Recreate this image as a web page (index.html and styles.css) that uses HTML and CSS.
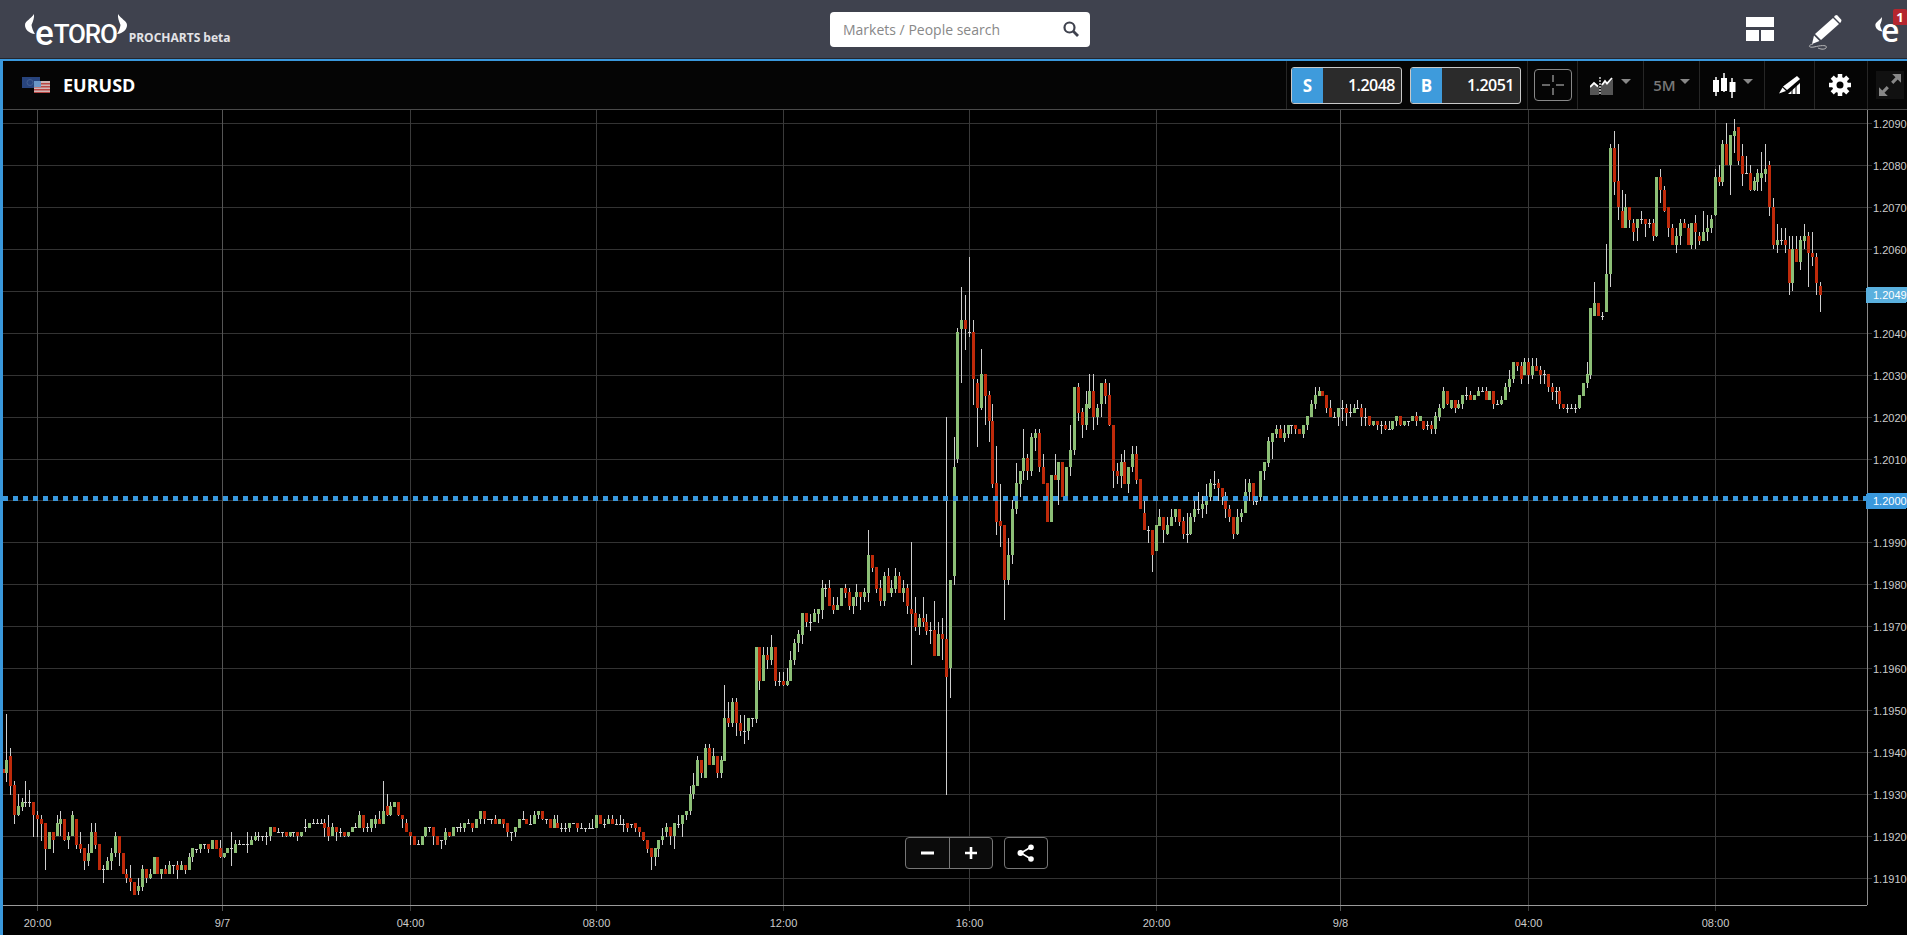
FILE: index.html
```html
<!DOCTYPE html>
<html lang="en">
<head>
  <meta charset="UTF-8" />
  <title>eToro ProCharts - EURUSD</title>
  <link rel="stylesheet" href="styles.css">
</head>
<body>
  <header class="topbar">
    <div class="brand">
      <div class="logo">
        <svg class="horn" width="10" height="22" viewBox="0 0 10 22"><path d="M9 0C9.500 4 8 7 6.500 11C7 14 8 17 10 20C4 19.500 0 15.500 0 11C0 7 6 5 9 0Z" fill="#fff"/></svg>
        <span class="logo-e">e</span><span class="logo-rest">TORO</span>
        <svg class="horn" width="10" height="22" viewBox="0 0 10 22"><path d="M1 0C0.500 4 2 7 3.500 11C3 14 2 17 0 20C6 19.500 10 15.500 10 11C10 7 4 5 1 0Z" fill="#fff"/></svg>
      </div>
      <span class="procharts">PROCHARTS beta</span>
    </div>
    <div class="search">
      <input type="text" placeholder="Markets / People search" />
      <svg width="16" height="16" viewBox="0 0 16 16"><circle cx="6.500" cy="6.500" r="5" fill="none" stroke="#3f424e" stroke-width="2.200"/><path d="M10.300 10.300L15 15" stroke="#3f424e" stroke-width="2.800"/></svg>
    </div>
    <div class="top-icons">
      <svg class="icon-layout" width="28" height="24" viewBox="0 0 28 24"><rect width="28" height="10" fill="#fff"/><rect y="13" width="13" height="11" fill="#fff"/><rect x="15" y="13" width="13" height="11" fill="#fff"/></svg>
      <svg class="icon-pencil" width="34" height="36" viewBox="0 0 34 36">
        <path d="M25 3L31 9L13 25L7 19Z" fill="#fff"/>
        <path d="M27 0.500L29 0L33.500 5L33 7L32 8L26 2Z" fill="#fff"/>
        <path d="M6 20.500L11.500 26L4 29Z" fill="#fff"/>
        <path d="M5 29C0 30 0 33 6 32C14 30 20 30 18 33C16 35 12 34 10 33" fill="none" stroke="#bbb" stroke-width="1"/>
      </svg>
      <div class="account">
        <svg class="horn-small" width="8" height="16" viewBox="0 0 10 22"><path d="M9 0C9.500 4 8 7 6.500 11C7 14 8 17 10 20C4 19.500 0 15.500 0 11C0 7 6 5 9 0Z" fill="#fff"/></svg>
        <span class="account-e">e</span>
        <span class="badge">1</span>
      </div>
    </div>
  </header>

  <main class="panel">
    <div class="toolbar">
      <div class="symbol">
        <span class="flags">
          <svg width="28" height="16" viewBox="0 0 28 16">
            <rect width="18" height="11" y="0" fill="#2f4f92"/>
            <circle cx="8" cy="5.500" r="3" fill="none" stroke="#4f6fa8" stroke-width="1"/>
            <rect x="12" y="4" width="16" height="12" fill="#f3d6d6"/>
            <rect x="12" y="6" width="16" height="1.500" fill="#d9534f"/>
            <rect x="12" y="9" width="16" height="1.500" fill="#d9534f"/>
            <rect x="12" y="12" width="16" height="1.500" fill="#d9534f"/>
            <rect x="12" y="15" width="16" height="1" fill="#d9534f"/>
            <rect x="12" y="4" width="7" height="6" fill="#7fb2ea"/>
          </svg>
        </span>
        <span class="symbol-name">EURUSD</span>
      </div>
      <div class="tools">
        <div class="tool tool-prices">
          <div class="price-box"><span class="price-side">S</span><span class="price-value">1.2048</span></div>
          <div class="price-box"><span class="price-side">B</span><span class="price-value">1.2051</span></div>
        </div>
        <div class="tool tool-cross">
          <div class="cross-box">
            <svg width="24" height="24" viewBox="0 0 24 24"><path d="M1 12H9M15 12H23M12 2V9M12 15V22" stroke="#888" stroke-width="1.500"/></svg>
          </div>
        </div>
        <div class="tool tool-type">
          <svg class="type-icon" width="23" height="18" viewBox="0 0 23 18">
            <path d="M0 18V10L4 6L9 10V18Z" fill="#555"/>
            <path d="M11 18V7L15 5L17 7L23 2V18Z" fill="#555"/>
            <path d="M0 10L4 6L8 9.500M12 8L15 4L17 6.500L22 1" fill="none" stroke="#fff" stroke-width="1.800"/>
            <path d="M10 0V18" stroke="#fff" stroke-width="1.200" stroke-dasharray="2 1"/>
          </svg>
          <span class="caret"></span>
        </div>
        <div class="tool tool-period">
          <span class="period">5M</span>
          <span class="caret"></span>
        </div>
        <div class="tool tool-candles">
          <svg class="candles-icon" width="23" height="25" viewBox="0 0 23 25">
            <path d="M3 4V23M11 0V19M19 5V25" stroke="#fff" stroke-width="1.500"/>
            <rect y="7" width="6" height="12" fill="#fff"/>
            <rect x="8" y="5" width="6" height="13" fill="#fff"/>
            <rect x="16.500" y="9" width="6" height="10" fill="#fff"/>
          </svg>
          <span class="caret"></span>
        </div>
        <div class="tool tool-draw">
          <svg width="21" height="18" viewBox="0 0 21 18">
            <path d="M18 0L21 3L8 14L4 10.500Z" fill="#fff"/>
            <path d="M3.500 11.500L7 15L0 17.500Z" fill="#fff"/>
            <path d="M9 18L21 7V18Z" fill="#fff"/>
            <path d="M13 18V13M17 18V9" stroke="#000" stroke-width="1"/>
          </svg>
        </div>
        <div class="tool tool-gear">
          <svg width="22" height="22" viewBox="0 0 22 22">
            <g stroke="#fff" stroke-width="4.500">
              <path d="M11 0V22M0 11H22M3.200 3.200L18.800 18.800M18.800 3.200L3.200 18.800"/>
            </g>
            <circle cx="11" cy="11" r="8" fill="#fff"/>
            <circle cx="11" cy="11" r="3.500" fill="#050505"/>
          </svg>
        </div>
        <div class="tool tool-full">
          <svg width="22" height="22" viewBox="0 0 20 20">
            <path d="M12 0H20V8L17 5L13 9L11 7L15 3Z" fill="#888"/>
            <path d="M8 20H0V12L3 15L7 11L9 13L5 17Z" fill="#888"/>
          </svg>
        </div>
      </div>
    </div>

    <div class="chart">
      <svg id="plot" class="plot" viewBox="3 110 1904 825" width="1904" height="825"></svg>
      <div class="chart-controls">
        <div class="zoom-group">
          <button class="ctl-btn" type="button"><svg width="14" height="14" viewBox="0 0 14 14"><rect y="5.500" width="13" height="3" fill="#fff"/></svg></button>
          <button class="ctl-btn" type="button"><svg width="14" height="14" viewBox="0 0 14 14"><path d="M7 1V13M1 7H13" stroke="#fff" stroke-width="2.600"/></svg></button>
        </div>
        <button class="ctl-btn share" type="button">
          <svg width="18" height="18" viewBox="0 0 18 18"><path d="M14 3L4 9L14 15" fill="none" stroke="#fff" stroke-width="1.600"/><circle cx="14" cy="3.200" r="2.800" fill="#fff"/><circle cx="3.500" cy="9" r="3" fill="#fff"/><circle cx="14" cy="15" r="2.800" fill="#fff"/></svg>
        </button>
      </div>
    </div>
  </main>

  <script src="chart.js"></script>
</body>
</html>
```

FILE: styles.css
```css
* {
  box-sizing: border-box;
}
html, body {
  margin: 0;
  height: 100%;
  overflow: hidden;
}
body {
  display: flex;
  flex-direction: column;
  background-color: #000;
  font-family: "Open Sans", Arial, sans-serif;
  color: #fff;
}

/* top bar */
.topbar {
  display: flex;
  align-items: center;
  height: 59px;
  flex: none;
  background-color: #3f424e;
  border-bottom: 1px solid #24262d;
}
.brand {
  display: flex;
  align-items: flex-end;
  width: 830px;
  height: 100%;
  padding: 0 0 13px 25px;
}
.logo {
  display: flex;
  align-items: flex-end;
  height: 32px;
  margin-bottom: -1px;
  line-height: 1;
  font-family: Roboto, Arial, sans-serif;
  font-weight: 500;
}
.horn {
  align-self: flex-start;
  flex: none;
}
.logo-e {
  font-size: 35px;
  line-height: 24px;
}
.logo-rest {
  font-size: 26px;
  line-height: 24px;
  letter-spacing: -1.2px;
}
.procharts {
  margin-left: 2px;
  font-size: 12px;
  line-height: 14px;
  font-weight: 700;
  color: #e3e3e6;
}
.search {
  display: flex;
  align-items: center;
  width: 260px;
  height: 35px;
  padding: 0 11px 0 13px;
  background-color: #fff;
  border-radius: 4px;
}
.search input {
  flex: 1;
  min-width: 0;
  border: 0;
  padding: 0;
  outline: none;
  font-family: "Open Sans", Arial, sans-serif;
  font-size: 14px;
}
.search input::placeholder {
  color: #888;
  opacity: 1;
}
.top-icons {
  display: flex;
  flex: 1;
  align-items: center;
  justify-content: flex-end;
  height: 100%;
}
.icon-layout {
  margin-right: 34px;
}
.icon-pencil {
  margin-top: 8px;
  margin-right: 33px;
}
.account {
  position: relative;
  display: flex;
  align-items: flex-start;
  width: 32px;
  height: 100%;
}
.horn-small {
  flex: none;
  margin-top: 17px;
}
.account-e {
  font-size: 32px;
  font-weight: 600;
  line-height: 30px;
  margin-top: 15px;
  margin-left: -2px;
}
.badge {
  position: absolute;
  top: 9px;
  right: 0;
  width: 14px;
  height: 16px;
  border-radius: 2px 2px 0 2px;
  background-color: #b5262e;
  font-size: 13px;
  line-height: 16px;
  font-weight: 700;
  text-align: center;
}

/* chart panel */
.panel {
  display: flex;
  flex-direction: column;
  flex: 1;
  min-height: 0;
  background-color: #000;
  border-top: 2px solid #3a98dc;
  border-left: 3px solid #3a98dc;
}
.toolbar {
  display: flex;
  align-items: stretch;
  justify-content: space-between;
  height: 49px;
  flex: none;
  background-color: #050505;
  border-bottom: 1px solid #4a4a4a;
}
.symbol {
  display: flex;
  align-items: center;
  padding-left: 19px;
}
.flags {
  display: flex;
  margin-right: 13px;
  opacity: 0.85;
}
.symbol-name {
  font-size: 18px;
  font-weight: 700;
}
.tools {
  display: flex;
  height: 100%;
}
.tool {
  display: flex;
  align-items: center;
  justify-content: center;
  border-left: 1px solid #262626;
}
.tool-prices {
  width: 241px;
  gap: 8px;
  justify-content: flex-start;
  padding-left: 4px;
}
.tool-cross {
  width: 50px;
}
.tool-type {
  width: 66px;
  gap: 8px;
}
.type-icon {
  margin-top: 2px;
}
.tool-period {
  width: 56px;
  gap: 4px;
}
.tool-candles {
  width: 65px;
  gap: 7px;
  padding-left: 2px;
}
.tool-draw {
  width: 50px;
}
.tool-gear {
  width: 53px;
  padding-right: 2px;
}
.tool-full {
  width: 40px;
  padding-left: 5px;
}
.price-box {
  display: flex;
  width: 111px;
  height: 37px;
  border: 1px solid #c8c8c8;
  border-radius: 3px;
  overflow: hidden;
  background-color: #2b2b2b;
}
.price-side {
  width: 31px;
  background-color: #3e9bdc;
  font-size: 17px;
  font-weight: 700;
  line-height: 35px;
  text-align: center;
}
.price-value {
  flex: 1;
  padding-right: 6px;
  font-size: 16px;
  font-weight: 600;
  line-height: 35px;
  text-align: right;
  letter-spacing: -0.5px;
}
.cross-box {
  display: flex;
  align-items: center;
  justify-content: center;
  width: 38px;
  height: 32px;
  border: 1px solid #888;
  border-radius: 4px;
}
.caret {
  width: 0;
  height: 0;
  margin-top: -8px;
  border-left: 5px solid transparent;
  border-right: 5px solid transparent;
  border-top: 5px solid #888;
}
.period {
  font-size: 15px;
  font-weight: 600;
  color: #777;
}
.tool-full svg {
  background-color: #111;
  box-shadow: 0 0 0 3px #111;
}

/* chart area */
.chart {
  position: relative;
  flex: 1;
  min-height: 0;
}
.plot {
  display: block;
  font-family: "Liberation Sans", Arial, sans-serif;
  font-size: 11px;
}
.chart-controls {
  position: absolute;
  left: 902px;
  top: 727px;
  display: flex;
  gap: 11px;
}
.zoom-group {
  display: flex;
  border: 1px solid #777;
  border-radius: 4px;
  overflow: hidden;
  background-color: #0b0b0b;
}
.ctl-btn {
  display: flex;
  align-items: center;
  justify-content: center;
  width: 43px;
  height: 30px;
  padding: 0;
  border: 0;
  background-color: transparent;
}
.zoom-group .ctl-btn + .ctl-btn {
  border-left: 1px solid #777;
}
.share {
  width: 44px;
  height: 32px;
  background-color: #000;
  border: 1px solid #777;
  border-radius: 4px;
}
```

FILE: chart.js
```js
// candles read off the chart, values are thirds of a pixel from the segment origin
// kind,x,bodyTop,bodyBottom,wickTop,wickBottom  (g up, r down, d doji)
var segments = [
  { x: 0, y: 700, rows: `
    r,9,207,219,207,219 g,19,180,219,42,246 r,31,168,258,144,285 r,43,255,345,243,372 g,55,318,345,282,348 g,67,306,321,294,333
    d,76,307,307,243,321 d,88,307,307,270,321 r,100,306,345,306,410 r,112,345,357,333,410 r,124,357,372,345,422 r,136,369,447,369,510
    g,148,396,447,396,447 r,160,396,420,396,459 g,172,369,408,345,408 g,181,357,372,333,408 r,193,357,420,357,423 g,205,408,420,396,447
    g,217,345,408,333,408 r,229,357,435,357,447 r,241,432,447,396,459 r,253,444,483,444,510 g,265,459,483,432,498 g,274,396,459,369,459
    r,286,396,435,369,447 r,298,432,510,432,510 d,310,507,507,495,549 g,322,483,510,471,510 g,334,459,483,444,510 g,346,408,459,396,471
    r,358,408,459,408,498 r,370,459,522,459,522 r,379,522,534,507,549 r,391,534,546,495,573 r,403,546,585,546,585 g,415,558,573,534,585
    g,427,507,561,495,573 r,439,507,534,507,549 g,451,522,534,507,537 g,463,471,522,471,522 r,472,471,522,471,522 g,484,507,522,507,537
    r,496,507,522,495,522 g,508,495,522,483,522 d,520,495,495,495,522 r,532,495,510,483,537 g,544,495,510,483,510 r,556,495,510,495,522
    g,568,471,510,459,510 g,577,444,471,444,486 d,589,446,446,446,459 g,601,432,447,432,459 d,613,433,433,433,447 r,625,432,447,432,459
    g,637,420,447,420,447 r,649,420,447,420,447 r,661,444,471,420,474 g,673,459,471,459,474 g,682,444,459,444,459 d,694,445,445,396,498
    g,706,432,459,420,459 d,718,433,433,420,435 d,730,433,433,433,435 d,742,433,433,396,459 g,754,420,435,408,435 g,766,408,420,396,423
    d,775,408,408,396,423 d,787,408,408,408,423 d,799,408,408,396,435 g,811,381,408,381,423 r,823,381,396,381,396 d,835,397,397,384,400
    d,847,397,397,397,410 r,859,396,408,396,410 g,871,396,408,396,410 d,880,397,397,397,410 r,892,396,408,396,423 g,904,396,408,396,410
    d,916,382,382,357,396 g,928,369,384,369,384 d,940,370,370,357,372 d,952,370,370,357,372 ` },
  { x: 300, y: 760, rows: `
    d,64,190,190,178,190 r,73,190,204,178,230 r,85,202,228,166,243 g,97,202,228,190,228 r,109,202,216,202,243 d,121,217,217,204,230
    r,133,216,228,216,230 g,145,216,228,216,230 g,157,202,216,202,216 d,166,202,202,190,204 g,178,166,204,154,204 r,190,166,204,166,216
    d,202,202,202,190,216 g,214,178,204,178,216 g,226,178,192,166,204 r,238,178,192,154,192 g,250,154,192,64,192 r,262,138,166,102,168
    g,271,138,166,126,168 g,283,126,142,126,142 r,295,126,166,126,168 r,307,166,178,166,204 r,319,190,216,178,216 r,331,216,228,216,255
    r,343,228,255,228,255 d,355,253,253,240,255 g,367,228,255,228,255 g,376,202,228,202,230 d,388,202,202,202,216 r,400,202,228,202,255
    r,412,228,255,228,255 d,424,241,241,241,267 g,436,216,241,204,255 r,448,216,228,216,230 g,460,202,228,202,228 d,472,202,202,202,216
    d,481,202,202,190,216 g,493,190,204,190,216 d,505,190,190,178,192 r,517,190,204,190,216 g,529,178,204,178,204 g,541,154,178,154,192
    r,553,154,178,154,192 d,565,178,178,178,180 d,574,178,178,178,192 r,586,178,192,166,192 g,598,178,192,178,192 r,610,178,192,178,204
    r,622,190,216,190,230 d,634,217,217,217,243 g,646,202,216,202,230 g,658,178,204,178,204 d,670,178,178,154,180 r,679,178,192,178,192
    d,691,191,191,166,192 g,703,166,192,154,192 g,715,154,166,154,178 r,727,154,178,154,180 d,739,178,178,178,192 r,751,178,204,178,204
    g,763,178,204,166,204 r,772,190,204,166,204 d,784,203,203,190,216 d,796,203,203,190,216 g,808,190,204,190,216 d,820,190,190,190,192
    r,832,190,204,190,216 d,844,203,203,190,204 d,856,203,203,203,216 d,868,203,203,190,204 d,877,203,203,178,204 g,889,166,204,166,204
    r,901,166,192,166,192 d,913,191,191,178,204 g,925,178,192,166,192 r,937,178,192,166,192 d,949,191,191,178,192 d,961,191,191,166,192
    d,970,191,191,178,216 r,982,190,204,190,216 d,994,191,191,191,204 r,1006,190,204,190,216 r,1018,202,216,202,230 r,1030,216,241,216,243
    r,1042,240,267,240,280 r,1054,264,291,264,330 g,1066,264,291,264,318 g,1075,240,267,240,291 g,1087,228,241,204,255 g,1099,202,216,190,230
    r,1111,202,228,202,255 g,1123,190,228,190,267 d,1135,191,191,166,204 g,1147,166,192,166,230 g,1159,154,166,154,180 g,1171,102,154,78,166
    g,1180,75,102,40,117 ` },
  { x: 640, y: 520, rows: `
    g,172,720,798,708,798 r,184,720,759,720,774 g,196,684,774,672,774 r,208,684,735,672,735 g,220,708,735,684,735 r,232,708,759,708,774
    g,244,720,759,708,774 g,253,594,723,495,723 r,265,594,609,546,621 g,277,546,609,534,621 r,289,546,609,534,648 r,301,609,633,585,648
    d,313,633,633,585,672 g,325,594,633,594,660 d,337,595,595,595,621 g,349,381,597,381,609 r,358,381,483,381,510 g,370,405,483,381,483
    r,382,405,420,381,447 g,394,381,420,345,435 r,406,381,483,381,498 d,418,484,484,456,498 r,430,483,495,456,498 g,442,483,495,444,498
    g,451,420,483,393,483 g,463,369,420,357,435 g,475,342,369,330,396 g,487,279,345,279,372 r,499,279,306,279,321 d,511,307,307,282,333
    g,523,279,306,267,306 g,535,267,282,267,309 g,547,204,270,180,297 d,556,205,205,192,232 r,568,204,258,180,258 r,580,255,270,231,282
    g,592,255,270,231,270 g,604,204,258,204,258 r,616,204,219,192,234 r,628,216,258,204,270 g,640,231,258,231,282 g,649,216,231,192,258
    r,661,216,231,216,270 g,673,216,231,204,246 g,685,105,219,30,246 r,697,105,144,105,156 r,709,141,207,141,219 r,721,204,243,180,258
    g,733,168,243,156,258 r,745,168,219,144,219 g,754,204,219,180,232 g,766,168,207,144,219 r,778,168,219,156,219 g,790,204,219,180,246
    r,802,204,258,192,282 r,814,267,282,66,435 r,826,279,321,231,333 g,838,294,321,282,345 r,850,294,306,231,321 r,859,306,333,282,345
    d,871,331,331,306,372 r,883,330,408,243,408 g,895,342,408,306,408 r,907,342,357,294,420 r,919,357,471,-310,825 g,931,180,444,180,534
    g,943,-159,168,-249,195 ` },
  { x: 920, y: 240, rows: `
    g,112,276,657,264,669 g,124,240,267,140,430 r,136,240,267,165,330 d,148,277,277,50,292 r,160,276,417,240,495 r,172,429,504,417,620
    g,184,402,504,328,510 r,196,402,468,402,555 r,208,465,543,453,606 r,217,543,732,492,745 r,229,729,846,618,885 r,241,843,858,732,920
    r,253,855,1020,855,1140 g,265,945,1020,893,1035 g,277,807,945,780,972 g,289,729,807,669,822 g,301,693,732,693,772 g,310,654,693,567,720
    r,322,654,693,642,720 g,334,591,693,579,708 g,346,579,594,567,633 r,358,579,681,567,696 r,370,681,732,642,732 r,382,729,846,729,846
    g,394,705,846,705,846 r,406,705,720,642,720 g,415,666,720,666,795 r,427,666,771,666,771 g,439,681,771,681,771 g,451,630,681,555,708
    g,463,441,630,441,645 r,475,441,519,429,543 r,487,516,555,504,594 g,499,492,555,453,570 g,508,453,504,403,507 r,520,453,531,403,570
    g,532,504,531,492,555 g,544,429,492,429,531 r,556,429,468,417,492 r,568,465,555,429,558 r,580,555,693,555,745 r,592,693,708,669,732
    g,604,666,708,642,745 r,613,666,732,630,732 g,625,681,732,681,759 g,637,642,681,618,696 r,649,642,720,618,732 r,661,717,807,717,807
    r,673,819,870,768,870 d,685,871,871,858,909 r,697,870,945,870,996 g,709,855,933,855,933 g,718,831,858,807,858 r,730,831,870,831,909
    g,742,855,882,831,885 g,754,831,858,807,858 g,766,807,831,807,846 r,778,807,846,807,858 r,790,843,882,831,897 d,802,883,883,819,909
    g,811,831,882,819,885 g,823,807,831,783,846 d,835,808,808,756,822 g,847,792,807,768,834 g,859,783,795,732,822 g,871,729,771,717,783
    d,883,731,731,693,747 r,895,729,744,717,783 r,907,744,771,744,795 r,916,783,807,756,834 r,928,807,831,795,846 r,940,831,882,831,897
    g,952,831,882,807,885 ` },
  { x: 1230, y: 340, rows: `
    g,34,519,531,507,546 g,46,456,519,417,519 g,58,429,456,417,483 r,70,429,483,429,495 d,79,484,484,484,495 g,91,393,471,393,483
    g,103,366,393,366,420 g,115,303,369,291,381 g,127,279,306,279,357 g,139,267,282,255,294 r,151,267,294,255,294 g,163,279,294,255,306
    g,175,255,282,255,294 d,184,256,256,256,282 r,196,255,267,255,282 r,208,267,282,267,282 g,220,255,282,255,294 g,232,228,255,228,270
    g,244,192,231,180,231 g,256,165,192,141,207 g,268,153,168,141,168 r,277,153,168,153,168 r,289,165,204,165,219 r,301,204,231,180,231
    d,313,230,230,216,231 g,325,204,231,204,258 d,337,205,205,180,243 r,349,204,219,192,258 d,361,217,217,192,231 g,373,204,219,192,219
    d,382,205,205,180,207 r,394,204,231,192,258 d,406,230,230,204,258 r,418,228,255,228,258 g,430,243,255,243,258 r,442,243,255,243,270
    d,454,256,256,243,282 r,466,255,267,243,270 d,478,268,268,243,270 g,487,243,267,243,270 g,499,228,243,228,258 r,511,228,255,228,258
    g,523,243,255,243,258 d,535,244,244,244,258 g,547,228,243,228,243 r,559,228,243,216,258 g,571,228,243,228,243 r,580,243,267,243,270
    d,592,256,256,243,270 r,604,255,267,243,282 g,616,228,267,216,282 g,628,204,231,192,243 g,640,153,204,141,207 r,652,153,192,153,195
    g,664,180,204,180,207 r,676,180,204,180,219 g,685,192,204,180,207 g,697,165,192,165,207 d,709,166,166,141,180 r,721,165,180,153,180
    g,733,165,180,165,180 g,745,153,168,141,168 d,757,154,154,141,156 r,769,153,180,141,180 g,778,153,180,153,180 r,790,153,192,153,207
    d,802,193,193,180,195 g,814,180,192,168,195 g,826,141,180,129,180 g,838,117,141,90,156 g,850,66,117,66,129 r,862,66,78,66,93
    r,874,78,117,66,132 g,883,66,105,54,105 r,895,66,105,54,132 g,907,78,105,54,117 r,919,78,93,54,93 r,931,90,105,78,132
    d,943,103,103,90,132 r,955,102,141,102,156 r,967,141,156,129,180 d,979,154,154,141,192 r,988,153,192,141,207 r,1000,192,204,192,207
    d,1012,205,205,192,219 d,1024,205,205,192,207 d,1036,205,205,192,219 g,1048,165,204,165,207 g,1060,129,168,129,168 g,1072,102,129,66,144 ` },
  { x: 1590, y: 100, rows: `
    g,1,624,825,624,837 g,13,610,648,546,648 r,25,610,648,610,648 d,37,649,649,636,660 g,49,522,636,432,636 g,61,144,522,132,561
    r,73,144,246,93,285 r,85,243,321,132,360 r,97,333,384,270,384 g,106,321,384,282,384 r,118,321,360,321,384 r,130,369,396,357,423
    g,142,357,384,357,423 d,154,358,358,333,372 r,166,357,372,357,411 d,178,370,370,357,384 r,190,369,408,357,423 g,199,231,408,231,411
    r,211,231,270,207,309 r,223,270,333,258,336 r,235,321,384,321,411 r,247,384,435,372,435 g,259,408,435,384,459 g,271,369,408,357,435
    r,283,369,384,357,384 r,295,384,435,372,435 g,304,369,435,369,447 r,316,369,396,345,447 r,328,408,423,396,435 g,340,396,423,333,423
    g,352,384,396,345,423 g,364,357,384,345,399 g,376,231,345,207,348 r,388,231,246,195,258 g,397,132,246,120,258 r,409,132,195,69,195
    g,421,105,195,105,285 g,433,93,108,57,159 r,445,81,183,81,195 r,457,168,222,132,258 d,469,220,220,168,222 r,481,219,270,195,272
    g,493,243,270,231,272 g,502,219,246,207,272 g,514,219,234,156,272 g,526,207,222,132,246 r,538,195,321,183,348 r,550,321,435,294,447
    g,562,420,435,372,459 d,574,421,421,384,435 r,586,420,435,384,459 r,598,447,549,408,585 g,607,447,549,408,573 r,619,447,486,408,486
    g,631,420,486,408,510 g,643,408,423,372,447 r,655,408,459,396,561 r,667,459,471,396,498 r,679,471,549,459,585 r,691,558,585,546,636 ` }
];

var AXIS_X = 1867;
var AXIS_Y = 905;
var WICK = "#cfcfcf";
var COLORS = { g: "#8cbf76", r: "#bf2a0a" };

// x, label, grid line colour (day changes are brighter)
var times = [
  [37, "20:00", "#4a4a4a"], [222, "9/7", "#555"], [410, "04:00", "#3a3a3a"], [596, "08:00", "#3a3a3a"], [783, "12:00", "#3a3a3a"],
  [969, "16:00", "#3a3a3a"], [1156, "20:00", "#3a3a3a"], [1340, "9/8", "#555"], [1528, "04:00", "#3a3a3a"], [1715, "08:00", "#3a3a3a"]
];

function rect(x, y, w, h, fill) {
  return '<rect x="' + x + '" y="' + y + '" width="' + w + '" height="' + h + '" fill="' + fill + '"/>';
}

function label(x, y, text, fill, anchor) {
  return '<text x="' + x + '" y="' + y + '" fill="' + fill + '" text-anchor="' + anchor + '">' + text + '</text>';
}

function priceY(i) {
  return Math.round(123 + i * 41.94);
}

function drawGrid() {
  var out = "";
  for (var i = 0; i < 19; i++) {
    var y = priceY(i);
    out += rect(3, y, AXIS_X + 5 - 3, 1, "#333");
    if (i !== 4 && i !== 9) {
      out += label(1873, y + 5, (1.209 - i * 0.001).toFixed(4), "#ccc", "start");
    }
  }
  times.forEach(function (t) {
    out += rect(t[0], 110, 1, AXIS_Y - 110 + 6, t[2]);
    out += label(t[0] + 0.5, 927, t[1], "#ccc", "middle");
  });
  return out;
}

function drawCandles() {
  var out = "";
  segments.forEach(function (seg) {
    seg.rows.trim().split(/\s+/).forEach(function (row) {
      var c = row.split(",");
      var x = Math.floor(seg.x + c[1] / 3);
      var top = Math.round(seg.y + c[2] / 3);
      var bottom = Math.round(seg.y + c[3] / 3);
      var high = Math.round(seg.y + c[4] / 3);
      var low = Math.round(seg.y + c[5] / 3);
      if (low > high) {
        out += rect(x, high, 1, low - high, WICK);
      }
      if (c[0] === "d") {
        out += rect(x - 1, top, 3, 1, WICK);
      } else {
        out += rect(x - 1, top, 3, Math.max(bottom - top, 1), COLORS[c[0]]);
      }
    });
  });
  return out;
}

function drawOverlay() {
  var out = "";
  for (var x = 3; x < AXIS_X; x += 10) {
    out += rect(x, 496, 5, 5, "#3a98dc");
  }
  out += rect(AXIS_X, 110, 1, AXIS_Y - 110, "#8a8a8a");
  out += rect(3, AXIS_Y, AXIS_X - 3, 1, "#9a9a9a");
  out += '<rect x="1866" y="287" width="41" height="16" rx="2" fill="#5ab0de"/>';
  out += label(1873, 299, "1.2049", "#fff", "start");
  out += '<rect x="1866" y="493" width="41" height="16" rx="2" fill="#3a98dc"/>';
  out += label(1873, 505, "1.2000", "#fff", "start");
  return out;
}

var plot = document.getElementById("plot");
plot.setAttribute("shape-rendering", "crispEdges");
plot.innerHTML = drawGrid() + drawCandles() + drawOverlay();
```
